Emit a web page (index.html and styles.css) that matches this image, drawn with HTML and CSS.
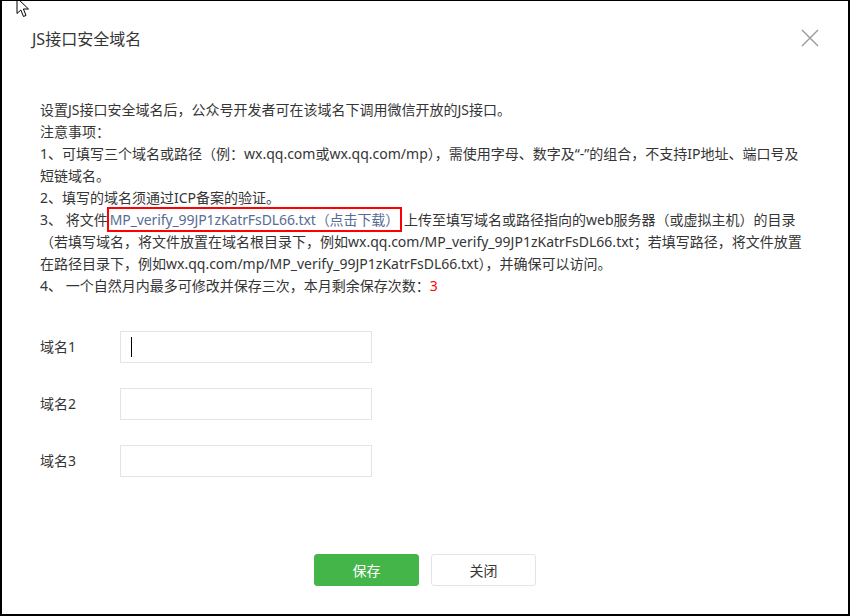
FILE: index.html
```html
<!DOCTYPE html>
<html lang="zh-CN">
<head>
<meta charset="utf-8">
<title>JS接口安全域名</title>
<link rel="stylesheet" href="styles.css">
</head>
<body>
<div class="dialog">
  <svg class="pointer" width="14" height="21" viewBox="0 0 14 21"><path d="M1 1 L1 16.5 L4.8 13 L7.5 19.5 L10 18.4 L7.4 12 L12.5 12 Z" fill="#fff" stroke="#000" stroke-width="1" stroke-linejoin="miter"/></svg>
  <div class="dialog-hd">
    <h3 class="dialog-title">JS接口安全域名</h3>
    <button class="dialog-close" type="button" aria-label="关闭">
      <svg width="18" height="18" viewBox="0 0 18 18"><path d="M1 1 L17 17 M17 1 L1 17" stroke="#9a9a9a" stroke-width="1.4" fill="none"/></svg>
    </button>
  </div>
  <div class="dialog-bd">
    <div class="tips">
      <p>设置JS接口安全域名后，公众号开发者可在该域名下调用微信开放的JS接口。</p>
      <p>注意事项：</p>
      <p>1、可填写三个域名或路径（例：wx.qq.com或wx.qq.com/mp），需使用字母、数字及“-”的组合，不支持IP地址、端口号及<br>短链域名。</p>
      <p>2、填写的域名须通过ICP备案的验证。</p>
      <p>3、 将文件<span class="mark"><a class="link" href="#">MP_verify_99JP1zKatrFsDL66.txt（点击下载）</a></span>上传至填写域名或路径指向的web服务器（或虚拟主机）的目录<br>（若填写域名，将文件放置在域名根目录下，例如wx.qq.com/MP_verify_99JP1zKatrFsDL66.txt；若填写路径，将文件放置<br>在路径目录下，例如wx.qq.com/mp/MP_verify_99JP1zKatrFsDL66.txt），并确保可以访问。</p>
      <p>4、 一个自然月内最多可修改并保存三次，本月剩余保存次数：<em class="count">3</em></p>
    </div>
    <form class="form">
      <div class="form-row">
        <label class="form-label">域名1</label>
        <div class="field"><input class="input" type="text"><span class="caret"></span></div>
      </div>
      <div class="form-row">
        <label class="form-label">域名2</label>
        <div class="field"><input class="input" type="text"></div>
      </div>
      <div class="form-row">
        <label class="form-label">域名3</label>
        <div class="field"><input class="input" type="text"></div>
      </div>
    </form>
  </div>
  <div class="dialog-ft">
    <button class="btn btn-primary" type="button">保存</button>
    <button class="btn btn-default" type="button">关闭</button>
  </div>
</div>
</body>
</html>
```
FILE: styles.css
```css
html, body {
  margin: 0;
  padding: 0;
  background: #fff;
}
body {
  font-family: "Noto Sans", "Noto Sans CJK SC", sans-serif;
  color: #353535;
  font-size: 14px;
  text-autospace: no-autospace;
}
.dialog {
  position: relative;
  box-sizing: border-box;
  width: 850px;
  height: 616px;
  border: 2px solid #000;
  border-top-width: 1px;
  background: #fff;
  overflow: hidden;
}
.pointer {
  position: absolute;
  left: 14px;
  top: -4px;
}
.dialog-hd {
  height: 76px;
  display: flex;
  align-items: center;
  justify-content: space-between;
  padding: 0 29px 0 30px;
}
.dialog-title {
  margin: 0;
  font-size: 16px;
  font-weight: normal;
  line-height: 24px;
  color: #353535;
}
.dialog-close {
  border: 0;
  background: none;
  padding: 0;
  width: 18px;
  height: 18px;
  margin-top: -3px;
  cursor: pointer;
}
.dialog-close svg {
  display: block;
}
.dialog-bd {
  padding: 22px 38px 0 38px;
}
.tips p {
  margin: 0;
  line-height: 22px;
  white-space: nowrap;
}
.mark {
  border: 2px solid #f00;
  padding: 1px 1px 1px 1px;
  margin-left: -1px;
  margin-right: 2px;
}
.link {
  color: #576b95;
  text-decoration: none;
  letter-spacing: -0.1px;
}
.count {
  font-style: normal;
  color: #f00;
}
.form {
  margin-top: 34px;
  display: flex;
  flex-direction: column;
  gap: 25px;
}
.form-row {
  display: flex;
  align-items: center;
  height: 32px;
}
.form-label {
  width: 80px;
  flex: none;
  line-height: 32px;
}
.field {
  position: relative;
}
.input {
  box-sizing: border-box;
  width: 252px;
  height: 32px;
  border: 1px solid #e4e4e4;
  border-radius: 0;
  outline: none;
  padding: 0 10px;
  font: inherit;
  display: block;
}
.caret {
  position: absolute;
  left: 11px;
  top: 6px;
  width: 1px;
  height: 20px;
  background: #000;
}
.dialog-ft {
  display: flex;
  justify-content: center;
  gap: 12px;
  padding-top: 77px;
}
.btn {
  box-sizing: border-box;
  width: 105px;
  height: 32px;
  border-radius: 3px;
  font: inherit;
  font-size: 14px;
  cursor: pointer;
}
.btn-primary {
  background: #44b549;
  border: 1px solid #44b549;
  color: #fff;
}
.btn-default {
  background: #fff;
  border: 1px solid #e4e4e4;
  color: #353535;
}
```
